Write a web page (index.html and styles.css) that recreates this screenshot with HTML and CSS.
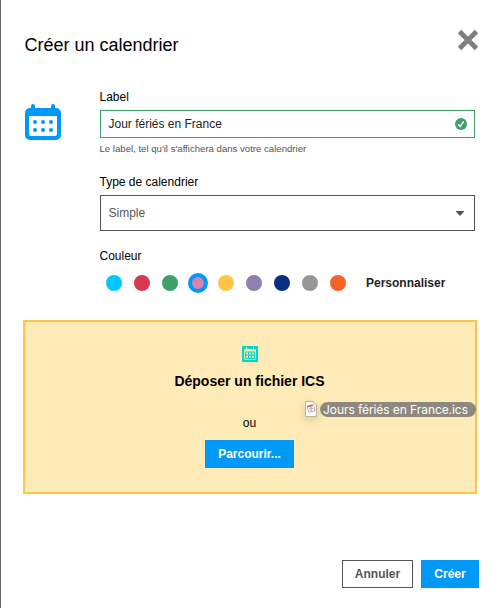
FILE: index.html
```html
<!DOCTYPE html>
<html lang="fr">
<head>
<meta charset="utf-8">
<title>Créer un calendrier</title>
<link rel="stylesheet" href="styles.css">
</head>
<body>
<main class="dialog">
  <header class="header">
    <h1 class="title">Créer un calendrier</h1>
    <svg class="close" viewBox="0 0 22 22"><path d="M2.5 2.5 19.5 19.5M19.5 2.5 2.5 19.5"/></svg>
  </header>
  <section class="form">
    <svg class="calendar" viewBox="0 0 36 36">
      <path fill="#0099f5" fill-rule="evenodd" d="M6 4V2a2 2 0 0 1 4 0v2h16V2a2 2 0 0 1 4 0v2h1a5 5 0 0 1 5 5v22a5 5 0 0 1-5 5H5a5 5 0 0 1-5-5V9a5 5 0 0 1 5-5zM4 12v18a2 2 0 0 0 2 2h24a2 2 0 0 0 2-2V12z"/>
      <g fill="#0099f5"><circle cx="10" cy="18" r="2"/><circle cx="18" cy="18" r="2"/><circle cx="26" cy="18" r="2"/><circle cx="10" cy="26" r="2"/><circle cx="18" cy="26" r="2"/><circle cx="26" cy="26" r="2"/></g>
    </svg>
    <div class="fields">
      <div class="label">Label</div>
      <div class="input"><span>Jour fériés en France</span>
        <svg class="valid" viewBox="0 0 12 12"><circle cx="6" cy="6" r="6" fill="#40a06c"/><path d="M3.1 6.2 5.2 8.4 8.7 3.5" fill="none" stroke="#fff" stroke-width="1.3"/></svg>
      </div>
      <div class="help">Le label, tel qu'il s'affichera dans votre calendrier</div>
      <div class="label">Type de calendrier</div>
      <div class="select"><span>Simple</span>
        <svg class="arrow" viewBox="0 0 8 5"><path d="M0 0h8v.6L4.6 4.6H3.4L0 .6z" fill="#555"/></svg>
      </div>
      <div class="label">Couleur</div>
      <div class="colors">
        <i class="dot cyan"></i><i class="dot red"></i><i class="dot green"></i><i class="dot pink selected"></i><i class="dot yellow"></i><i class="dot purple"></i><i class="dot navy"></i><i class="dot gray"></i><i class="dot orange"></i>
        <b class="custom">Personnaliser</b>
      </div>
    </div>
  </section>
  <section class="dropzone">
    <svg class="drop-icon" viewBox="0 0 16 16">
      <path fill="#00d9cb" d="M0 0h16v16H0z"/>
      <path fill="none" stroke="#ffebb8" d="M4.5 1v2.5M11.5 1v2.5"/>
      <rect x="2.5" y="3.5" width="11" height="10" rx="1" fill="none" stroke="#ffebb8"/>
      <path fill="#ffebb8" d="M2.5 3.5h11v2h-11zM4 6.5h2v2H4zM7 6.5h2v2H7zM10 6.5h2v2h-2zM4 9.7h2v2H4zM7 9.7h2v2H7zM10 9.7h2v2h-2z"/>
    </svg>
    <h2 class="drop-title">Déposer un fichier ICS</h2>
    <div class="or">ou</div>
    <button class="button browse">Parcourir...</button>
    <div class="dragged">
      <svg class="file" viewBox="0 0 12 16">
        <path d="M.5.5h8l3 3v12H.5z" fill="#fff" stroke="#aaa397" stroke-width=".8"/>
        <path d="M8.5.5v3h3" fill="#eee" stroke="#bbb" stroke-width=".6"/>
        <path d="M2 4.8 7.5 3.3l1 1.8-6 1.6z" fill="#e8605c"/>
        <path d="M2.3 6.5 3.7 11 9.7 10.3V5.2M4 8l4.5-.8M6.2 6v4.3" fill="none" stroke="#999" stroke-width=".8"/>
      </svg>
      <span class="filename">Jours fériés en France.ics</span>
    </div>
  </section>
  <footer class="footer">
    <button class="button cancel">Annuler</button>
    <button class="button create">Créer</button>
  </footer>
</main>
</body>
</html>
```

FILE: styles.css
```css
* { box-sizing: border-box; }
body { margin: 0; background: #fff; color: #000; font-family: "Liberation Sans", Arial, sans-serif; font-size: 12px; }
.dialog { height: 608px; border-left: 1px solid #666; overflow: hidden; }
.header { display: flex; justify-content: space-between; height: 90px; padding: 29px 20px 0 23.5px; }
.title { margin: 5px 0 0; font-size: 18px; line-height: 22px; font-weight: 400; white-space: nowrap; }
.close { width: 22px; height: 22px; fill: none; stroke: #808080; stroke-width: 4.8; }
.form { display: flex; height: 230px; padding-left: 24px; }
.calendar { width: 36px; height: 36px; margin: 14px 39px 0 0; }
.fields { width: 375px; }
.label { height: 20px; line-height: 14px; margin-left: -.5px; }
.input, .select { display: flex; align-items: center; justify-content: space-between; border: 1px solid #40a06c; color: #222; }
.input { height: 28px; padding: 0 7px 0 7.5px; }
.valid { width: 12px; height: 12px; }
.help { height: 37px; margin-left: -.5px; padding-top: 5px; font-size: 9.6px; line-height: 12px; color: #555; white-space: nowrap; }
.select { height: 36px; margin-bottom: 18px; padding: 0 10px 0 7.5px; border-color: #555; color: #555; }
.arrow { width: 8px; height: 5px; }
.colors { display: flex; align-items: center; gap: 12px; height: 16px; margin-top: 6px; padding-left: 6px; }
.dot { width: 16px; height: 16px; border-radius: 50%; flex: none; }
.selected { width: 20px; height: 20px; margin: 0 -2px; border: 4px solid #0099f5; }
.cyan { background: #00c8ff; }
.red { background: #d83950; }
.green { background: #40a06c; }
.pink { background: #de82ad; }
.yellow { background: #ffc646; }
.purple { background: #8e80b1; }
.navy { background: #092f80; }
.gray { background: #969696; }
.orange { background: #f46227; }
.custom { margin-left: 8px; color: #1f1f1f; }
.dropzone { position: relative; display: flex; flex-direction: column; align-items: center; width: 454px; height: 174px; margin-left: 22px; padding-top: 24px; border: 2px solid #ffc646; background: #ffebb8; }
.drop-icon { width: 16px; height: 16px; }
.drop-title { margin: 10px 1px 0 0; font-size: 14px; line-height: 18px; }
.or { margin: 26px 1px 0 0; line-height: 14px; }
.button { display: block; height: 28px; padding: 0; border: 0; background: #0099f5; color: #fff; font: bold 12px/28px "Liberation Sans", Arial, sans-serif; }
.browse { width: 89px; margin: 10px 1px 0 0; }
.dragged { position: absolute; left: 280px; top: 79px; display: flex; align-items: center; gap: 3px; }
.file { width: 12px; height: 16px; filter: drop-shadow(0 3px 5px #9b825066); }
.filename { width: 156px; height: 15px; padding-left: 3px; border-radius: 8px; background: #8d8981; color: #fff; font: 12px/15px Inter, sans-serif; letter-spacing: -.07px; white-space: nowrap; }
.footer { display: flex; justify-content: flex-end; gap: 8px; padding: 66px 20px 0 0; }
.cancel { width: 71px; border: 1px solid #555; background: #fff; color: #555; line-height: 26px; }
.create { width: 58px; }
```
